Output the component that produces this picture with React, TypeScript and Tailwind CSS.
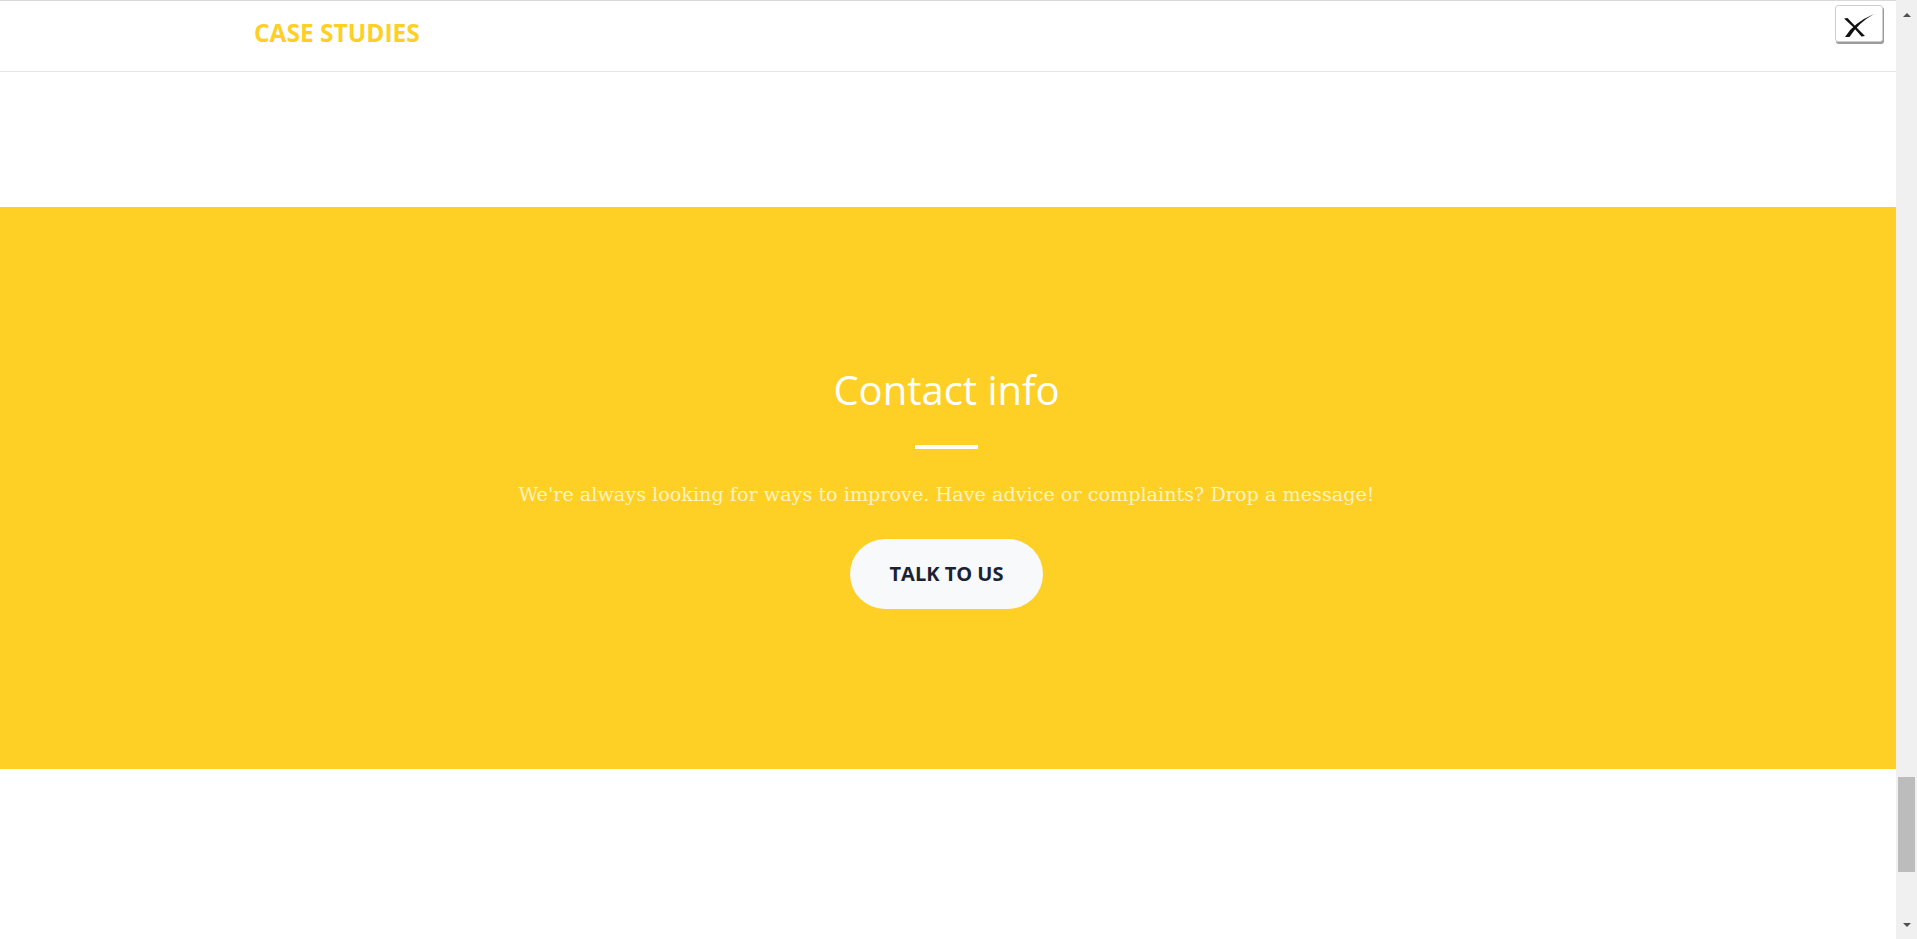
import React from "react";

function CloseIcon() {
  return (
    <svg width="48" height="36" viewBox="0 0 48 36" className="block">
      <path d="M8 12.5 L11.5 12 Q18 19 29 30 L25.5 30.5 Q17 20 8 12.5 Z" fill="#111" />
      <path d="M9 31 Q17 17 38 8 Q22 17 13.5 31 Z" fill="#111" />
    </svg>
  );
}

export default function App() {
  return (
    <div className="flex h-[939px] w-full overflow-hidden bg-white" style={{ fontFamily: '"Open Sans", sans-serif' }}>
      <div className="relative flex min-w-0 flex-1 flex-col">
        <header className="h-[72px] border-t border-b border-t-[#d8d8d8] border-b-[#e6e6e6] pt-[20px] pl-[254px]">
          <span className="block text-[24.5px] font-bold leading-[24px] text-[#fed026]">CASE STUDIES</span>
        </header>
        <button className="absolute top-[5px] right-[13px] h-[37px] w-[48px] rounded-[3px] border border-[#cfcfcf] bg-white shadow-[1px_2px_0_#9a9a9a]">
          <CloseIcon />
        </button>
        <div className="h-[135px]" />
        <section className="flex h-[562px] flex-col items-center bg-[#fed026] pt-[159px] pr-[3px]">
          <h2 className="text-[40px] font-normal leading-[48px] text-white">Contact info</h2>
          <div className="mt-[31px] h-[4px] w-[63px] bg-white" />
          <p className="mt-[32px] text-[19.2px] leading-[28px] text-[#fff2c0]" style={{ fontFamily: '"DejaVu Serif", serif' }}>
            We're always looking for ways to improve. Have advice or complaints? Drop a message!
          </p>
          <button className="mt-[30px] flex h-[70px] w-[193px] items-center justify-center rounded-full bg-[#f7f9fb] text-[20px] font-bold text-[#1b2232]">
            TALK TO US
          </button>
        </section>
        <div className="flex-1" />
      </div>
      <div className="flex w-[21px] flex-col bg-[#f0f0f0]">
        <div className="flex h-[17px] items-end justify-center">
          <div className="h-0 w-0 border-x-[4px] border-b-[4px] border-x-transparent border-b-[#505050]" />
        </div>
        <div className="ml-[2px] mt-[760px] h-[95px] w-[17px] bg-[#bcbcbc]" />
        <div className="flex-1" />
        <div className="flex h-[17px] items-start justify-center pt-[1px]">
          <div className="h-0 w-0 border-x-[4px] border-t-[4px] border-x-transparent border-t-[#505050]" />
        </div>
      </div>
    </div>
  );
}
